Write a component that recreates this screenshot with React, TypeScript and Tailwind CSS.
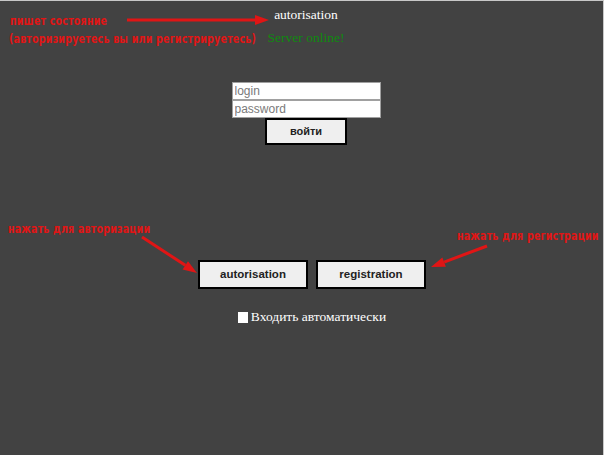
const serif = { fontFamily: '"Liberation Serif", "Times New Roman", serif' }

function Arrow({ x1, y1, x2, y2 }: { x1: number; y1: number; x2: number; y2: number }) {
  const a = Math.atan2(y2 - y1, x2 - x1)
  const len = 14
  const w = 5
  const bx = x2 - Math.cos(a) * len
  const by = y2 - Math.sin(a) * len
  const px = -Math.sin(a) * w
  const py = Math.cos(a) * w
  return (
    <g>
      <line x1={x1} y1={y1} x2={bx} y2={by} stroke="#e01515" strokeWidth={3} />
      <polygon points={`${x2},${y2} ${bx + px},${by + py} ${bx - px},${by - py}`} fill="#e01515" />
    </g>
  )
}

const note =
  "absolute whitespace-nowrap text-[#e01515] text-[9.5px] font-bold tracking-[0.2px] font-['DejaVu_Sans',sans-serif] leading-[12px] scale-y-[1.3] origin-top-left"

export default function App() {
  return (
    <div className="relative w-full h-[455px] overflow-hidden bg-[#424242] border-t border-r border-[#c8c8c8]">
      {/* main form */}
      <div className="flex flex-col items-center pl-[9px] pt-[5px]">
        <div className="text-white text-[13.5px] leading-[18px]" style={serif}>autorisation</div>
        <div className="text-[#0f8a0f] text-[13.5px] leading-[18px] mt-[5px]" style={serif}>Server online!</div>

        <div className="flex flex-col items-center mt-[35px] font-['Liberation_Sans',Arial,sans-serif]">
          <input
            placeholder="login"
            className="w-[149px] h-[18px] bg-white border border-[#a0a0a0] px-[2px] text-[12px] placeholder:text-[#7a7a7a] outline-none"
          />
          <input
            placeholder="password"
            type="password"
            className="w-[149px] h-[18px] bg-white border border-[#a0a0a0] px-[2px] text-[12px] placeholder:text-[#7a7a7a] outline-none"
          />
          <button className="w-[82px] h-[27px] bg-[#efefef] border-2 border-black text-[11px] font-bold text-[#222]">
            войти
          </button>
        </div>

        <div className="flex gap-[8px] mt-[115px] ml-[12px] font-['Liberation_Sans',Arial,sans-serif]">
          <button className="w-[110px] h-[29px] bg-[#efefef] border-2 border-black text-[11.5px] font-bold text-[#222]">
            autorisation
          </button>
          <button className="w-[110px] h-[29px] bg-[#efefef] border-2 border-black text-[11.5px] font-bold text-[#222]">
            registration
          </button>
        </div>

        <label className="flex items-center gap-[3px] mt-[20px] ml-[12px] text-white text-[13.5px] leading-[16px]" style={serif}>
          <span className="w-[10px] h-[11px] bg-white inline-block" />
          Входить автоматически
        </label>
      </div>

      {/* annotations */}
      <div className={`${note} left-[10px] top-[12px]`}>пишет состояние</div>
      <div className={`${note} left-[9px] top-[30px]`}>(авторизируетесь вы или регистрируетесь)</div>
      <div className={`${note} left-[8px] top-[220px]`}>нажать для авторизации</div>
      <div className={`${note} left-[457px] top-[227px]`}>нажать для регистрации</div>

      <svg className="absolute inset-0 pointer-events-none" width="604" height="455">
        <Arrow x1={127} y1={19} x2={269} y2={19} />
        <Arrow x1={142} y1={236} x2={197} y2={272} />
        <Arrow x1={487} y1={245} x2={431} y2={266} />
      </svg>
    </div>
  )
}
